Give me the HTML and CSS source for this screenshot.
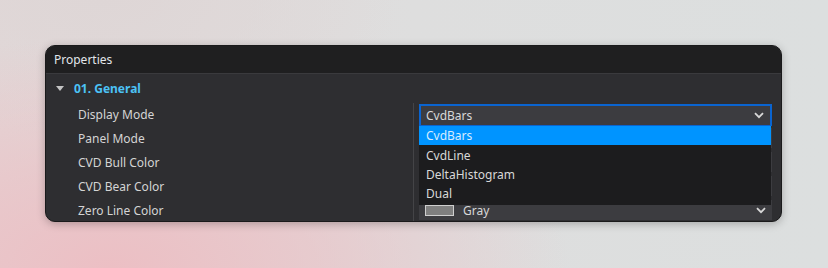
FILE: index.html
```html
<!DOCTYPE html>
<html>
<head>
<meta charset="utf-8">
<link rel="stylesheet" href="styles.css">
</head>
<body>
<div class="window">
  <div class="titlebar">Properties</div>
  <div class="content">
    <div class="section">
      <span class="tri"></span>
      <span class="section-title">01. General</span>
    </div>
    <div class="grid">
      <div class="labels">
        <div class="row">Display Mode</div>
        <div class="row">Panel Mode</div>
        <div class="row">CVD Bull Color</div>
        <div class="row">CVD Bear Color</div>
        <div class="row">Zero Line Color</div>
      </div>
      <div class="values">
        <div class="vrow">
          <div class="field active">
            <span>CvdBars</span>
            <svg class="chev" width="10" height="7" viewBox="0 0 10 7"><path d="M1 1.2 L5 5.2 L9 1.2" fill="none" stroke="#d8d8d8" stroke-width="1.8"/></svg>
          </div>
          <div class="menu">
            <div class="item sel">CvdBars</div>
            <div class="item">CvdLine</div>
            <div class="item">DeltaHistogram</div>
            <div class="item">Dual</div>
          </div>
        </div>
        <div class="vrow"><div class="field"></div></div>
        <div class="vrow"><div class="field"></div></div>
        <div class="vrow"><div class="field"></div></div>
        <div class="vrow">
          <div class="field">
            <span class="swatch gray"></span><span>Gray</span>
            <svg class="chev" width="10" height="7" viewBox="0 0 10 7"><path d="M1 1.2 L5 5.2 L9 1.2" fill="none" stroke="#d8d8d8" stroke-width="1.8"/></svg>
          </div>
        </div>
      </div>
    </div>
  </div>
</div>
</body>
</html>
```
FILE: styles.css
```css
html, body { margin: 0; padding: 0; }
body {
  width: 828px;
  height: 268px;
  overflow: hidden;
  font-family: "Noto Sans", "Open Sans", sans-serif;
  font-size: 12px;
  background:
    radial-gradient(ellipse 460px 230px at 110px 268px, #ecbfc4 0%, rgba(236,191,196,0.6) 45%, rgba(236,191,196,0) 100%),
    radial-gradient(ellipse 300px 140px at 100px 0px, #ded6d6 0%, rgba(222,214,214,0) 100%),
    linear-gradient(90deg, #e2d8d8 0%, #dedede 50%, #dcdfdf 100%);
  padding: 45px 0 0 45px;
  box-sizing: border-box;
}
.window {
  width: 737px;
  height: 177px;
  background: #2e2e31;
  border: 1px solid #1a1a1b;
  border-radius: 10px;
  overflow: hidden;
  box-sizing: border-box;
  box-shadow: 0 2px 8px rgba(0,0,0,0.25);
  display: flex;
  flex-direction: column;
}
.titlebar {
  height: 27px;
  flex: none;
  background: #1f1f20;
  border-bottom: 1px solid #3a3a3d;
  color: #e2e6ea;
  padding-left: 8px;
  display: flex;
  align-items: center;
  box-sizing: content-box;
}
.content { flex: 1; display: flex; flex-direction: column; }
.section {
  height: 29px;
  display: flex;
  align-items: center;
  padding-left: 10px;
  flex: none;
}
.tri {
  width: 0; height: 0;
  border-left: 4px solid transparent;
  border-right: 4px solid transparent;
  border-top: 5px solid #c4c4c4;
  margin-right: 10px;
}
.section-title { color: #4cc2f5; font-weight: bold; }
.grid { display: flex; flex: 1; }
.labels { width: 367px; flex: none; }
.row {
  height: 24px;
  display: flex;
  align-items: center;
  padding-left: 32px;
  color: #d4d4d4;
}
.row:nth-child(1) { height: 23px; }
.values {
  flex: 1;
  border-left: 1px solid #444447;
  padding: 0 9px 0 5px;
}
.vrow {
  height: 24px;
  display: flex;
  align-items: center;
  position: relative;
}
.vrow:nth-child(1) { height: 23px; }
.field {
  flex: 1;
  height: 20px;
  background: #3c3c40;
  display: flex;
  align-items: center;
  padding-left: 6px;
  color: #d8d8d8;
  position: relative;
  box-sizing: border-box;
}
.field.active {
  height: 22px;
  border: 2px solid #0a64d0;
  border-bottom-width: 1px;
  padding-left: 5px;
}
.chev { position: absolute; right: 6px; top: 50%; margin-top: -3px; }
.swatch {
  width: 29px; height: 11px;
  background: #7f7f7f;
  border: 1px solid #cfcfcf;
  margin-right: 9px;
  box-sizing: border-box;
}
.menu {
  position: absolute;
  left: 0; right: 1px;
  top: 22px;
  background: #1c1c1e;
  border-top: 1px solid #0a64d0;
  z-index: 5;
  padding-bottom: 2px;
}
.item {
  height: 19px;
  display: flex;
  align-items: center;
  padding-left: 7px;
  color: #d8d8d8;
}
.item.sel { background: #0094ff; color: #d6ecff; height: 19px; margin-bottom: 1px; }
```
